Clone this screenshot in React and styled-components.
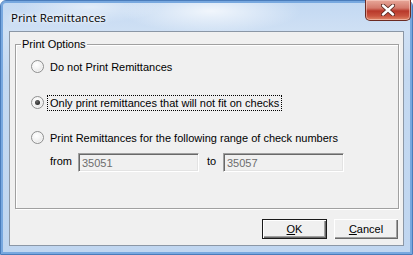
import React from "react";
import styled, { createGlobalStyle } from "styled-components";

const GlobalStyle = createGlobalStyle`
    html, body {
        margin: 0;
        padding: 0;
        background: #ffffff;
    }
`;

const Window = styled.div`
    box-sizing: border-box;
    width: 413px;
    height: 255px;
    display: flex;
    flex-direction: column;
    padding: 0 8px 8px 8px;
    border: 1px solid #4a7cbb;
    border-radius: 6px 6px 0 0;
    box-shadow: inset 0 0 0 2px #78a8df;
    background:
        radial-gradient(ellipse 90px 22px at 210px 10px, rgba(255, 255, 255, 0.75), rgba(255, 255, 255, 0)),
        radial-gradient(ellipse 70px 16px at 90px 6px, rgba(255, 255, 255, 0.5), rgba(255, 255, 255, 0)),
        linear-gradient(to bottom, #c2d8f2 0%, #cfe0f4 12%, #c4d9f1 30%, #c0d6f0 100%);
    font-family: "Liberation Sans", Arial, sans-serif;
`;

const TitleBar = styled.div`
    height: 30px;
    flex: 0 0 30px;
    display: flex;
    justify-content: space-between;
    align-items: flex-start;
    margin-right: -7px;
`;

const Title = styled.div`
    padding-top: 9px;
    padding-left: 2px;
    font-family: "Open Sans", "Liberation Sans", sans-serif;
    font-size: 11.5px;
    color: #000;
    text-shadow: 0 0 6px #fff, 0 0 3px #fff;
`;

const CloseButton = styled.div`
    box-sizing: border-box;
    width: 46px;
    height: 21px;
    margin-top: -1px;
    border: 1px solid #6b2b23;
    border-top: none;
    border-radius: 0 0 5px 5px;
    background: linear-gradient(to bottom, #e8a89a 0%, #d47a6c 40%, #b8382a 55%, #c9543f 80%, #e08a6a 100%);
    box-shadow: inset 0 0 0 1px rgba(255, 220, 210, 0.5);
    display: flex;
    align-items: center;
    justify-content: center;
`;

const Client = styled.div`
    flex: 1;
    box-sizing: border-box;
    border: 1px solid #8b97a6;
    background: #f0f0f0;
    display: flex;
    flex-direction: column;
    font-family: "Liberation Sans", Arial, sans-serif;
    font-size: 11px;
    color: #000;
`;

const GroupBox = styled.fieldset`
    box-sizing: border-box;
    margin: 6px 4px 0 5px;
    height: 171px;
    padding: 0;
    border: 1px solid #a0a0a0;
    box-shadow: inset 1px 1px 0 #fff, 1px 1px 0 #fff;
    display: flex;
    flex-direction: column;
    min-width: 0;
`;

const Legend = styled.legend`
    padding: 0 1px;
    margin-left: 5px;
    background: #f0f0f0;
    line-height: 13px;
`;

const Option = styled.label`
    display: flex;
    align-items: center;
    height: 17px;
    margin-top: ${({ $top }) => $top}px;
    margin-left: 15px;
    gap: 4px;
`;

const RadioCircle = styled.span`
    box-sizing: border-box;
    width: 13px;
    height: 13px;
    border-radius: 50%;
    border: 1px solid #8e8f8f;
    background: radial-gradient(circle at 40% 35%, #ffffff 0%, #f4f4f4 40%, #d6d6d6 100%);
    box-shadow: inset 0 0 0 1px #f6f6f6;
    display: flex;
    align-items: center;
    justify-content: center;
    flex: 0 0 13px;

    &::after {
        content: "";
        display: ${({ $checked }) => ($checked ? "block" : "none")};
        width: 5px;
        height: 5px;
        border-radius: 50%;
        background: radial-gradient(circle at 40% 35%, #6a6a6a, #0d0d0d);
    }
`;

const OptionText = styled.span`
    padding: 1px 2px;
    outline: ${({ $focused }) => ($focused ? "1px dotted #000" : "none")};
    outline-offset: 0;
    white-space: nowrap;
`;

const RangeRow = styled.div`
    display: flex;
    align-items: center;
    margin-top: 7px;
    margin-left: 34px;
`;

const RangeLabel = styled.span`
    width: ${({ $w }) => $w}px;
    padding-left: ${({ $pad }) => $pad || 0}px;
    flex: 0 0 auto;
    margin-top: -3px;
`;

const NumberBox = styled.div`
    box-sizing: border-box;
    width: 121px;
    height: 19px;
    border-top: 1px solid #a0a0a0;
    border-left: 1px solid #a0a0a0;
    border-right: 1px solid #ffffff;
    border-bottom: 1px solid #ffffff;
    box-shadow: inset 1px 1px 0 #696969, inset -1px -1px 0 #e3e3e3;
    background: #f0f0f0;
    color: #6d6d6d;
    padding: 3px 0 0 3px;
    line-height: 13px;
`;

const ButtonRow = styled.div`
    display: flex;
    justify-content: flex-end;
    gap: 7px;
    margin-top: 10px;
    padding-right: 5px;
`;

const Button = styled.button`
    box-sizing: border-box;
    width: ${({ $default }) => ($default ? 65 : 64)}px;
    height: 20px;
    padding: ${({ $default }) => ($default ? 0 : 1)}px;
    font-family: "Liberation Sans", Arial, sans-serif;
    font-size: 11px;
    color: #000;
    background: #f0f0f0;
    border: ${({ $default }) => ($default ? "1px solid #1a1a1a" : "none")};
    box-shadow: inset 1px 1px 0 #fff, inset -1px -1px 0 #696969, inset -2px -2px 0 #a0a0a0;

    u {
        text-decoration: underline;
        text-underline-offset: 1px;
    }
`;

const CloseIcon = () => (
    <svg width="14" height="12" viewBox="0 0 14 12">
        <path
            d="M2 1.5 L12 10.5 M12 1.5 L2 10.5"
            stroke="#5a2a22"
            strokeWidth="4.2"
            strokeLinecap="round"
        />
        <path
            d="M2 1.5 L12 10.5 M12 1.5 L2 10.5"
            stroke="#ffffff"
            strokeWidth="2.4"
            strokeLinecap="round"
        />
    </svg>
);

export default function App() {
    return (
        <>
            <GlobalStyle />
            <Window>
                <TitleBar>
                    <Title>Print Remittances</Title>
                    <CloseButton>
                        <CloseIcon />
                    </CloseButton>
                </TitleBar>
                <Client>
                    <GroupBox>
                        <Legend>Print Options</Legend>
                        <Option $top={7}>
                            <RadioCircle />
                            <OptionText>Do not Print Remittances</OptionText>
                        </Option>
                        <Option $top={19}>
                            <RadioCircle $checked />
                            <OptionText $focused>
                                Only print remittances that will not fit on checks
                            </OptionText>
                        </Option>
                        <Option $top={18}>
                            <RadioCircle />
                            <OptionText>
                                Print Remittances for the following range of check numbers
                            </OptionText>
                        </Option>
                        <RangeRow>
                            <RangeLabel $w={28}>from</RangeLabel>
                            <NumberBox>35051</NumberBox>
                            <RangeLabel $w={16} $pad={8}>
                                to
                            </RangeLabel>
                            <NumberBox>35057</NumberBox>
                        </RangeRow>
                    </GroupBox>
                    <ButtonRow>
                        <Button $default>
                            <u>O</u>K
                        </Button>
                        <Button>
                            <u>C</u>ancel
                        </Button>
                    </ButtonRow>
                </Client>
            </Window>
        </>
    );
}
